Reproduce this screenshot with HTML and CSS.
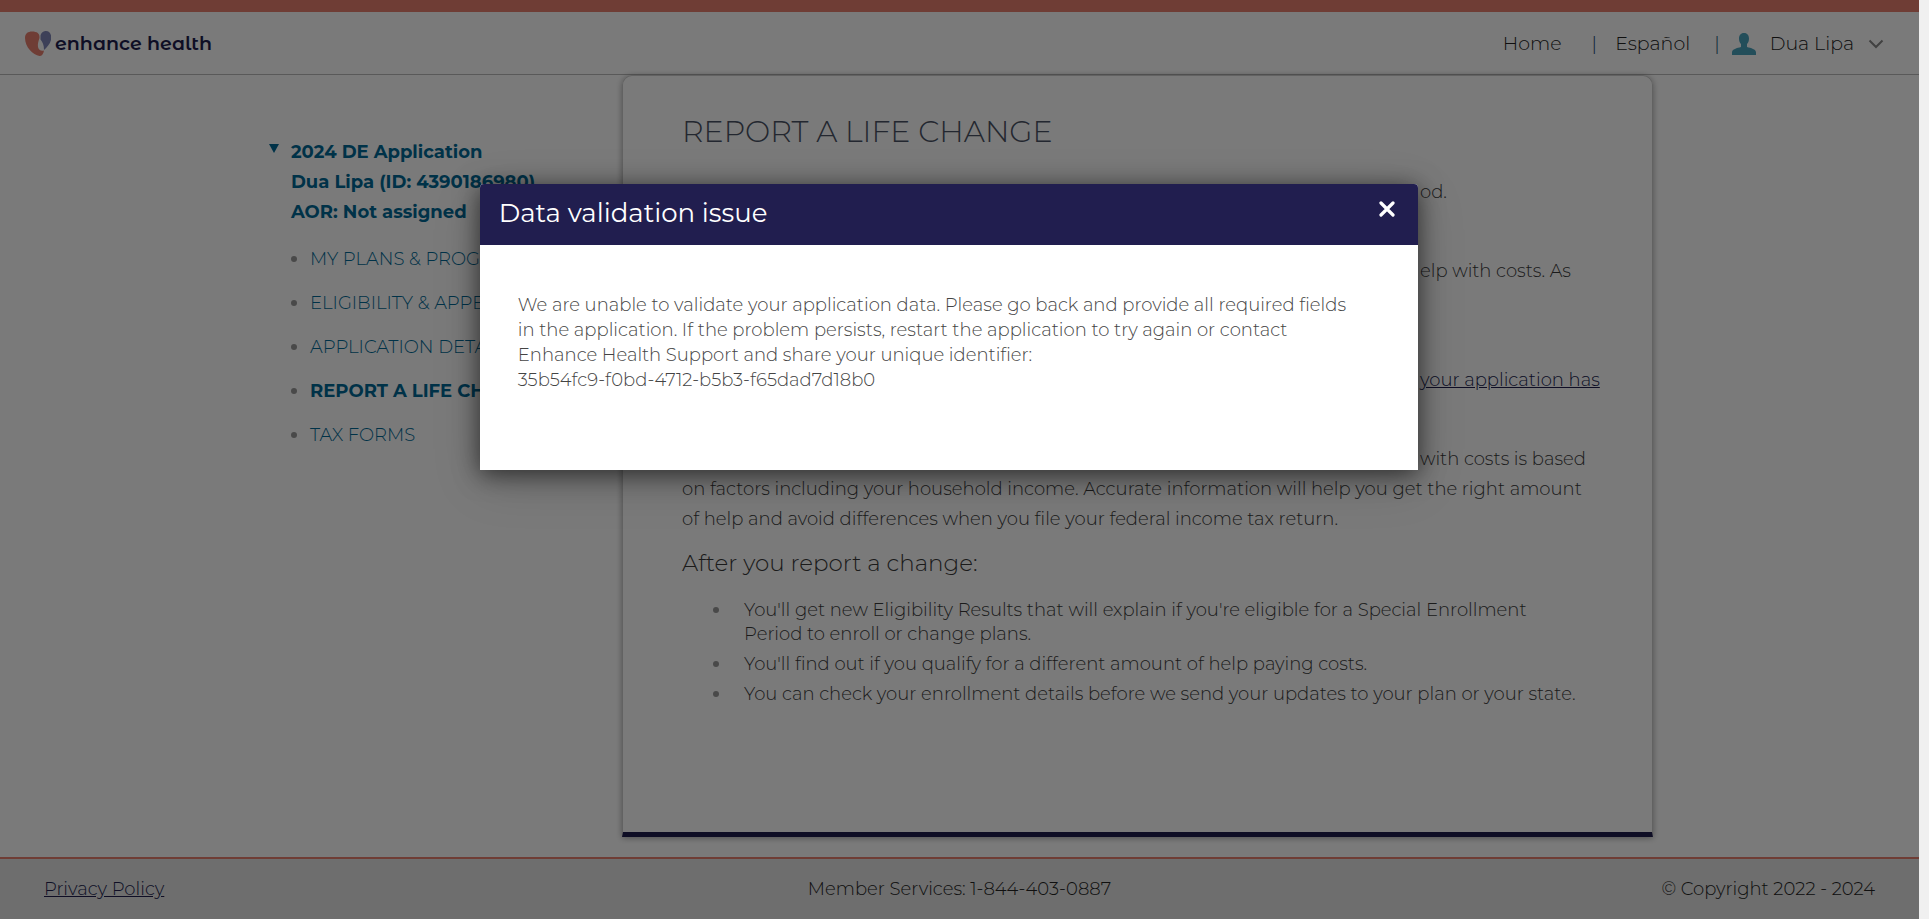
FILE: index.html
```html
<!DOCTYPE html>
<html lang="en">
<head>
<meta charset="utf-8">
<title>Report a life change</title>
<link rel="stylesheet" href="styles.css">
</head>
<body>
<div class="page">
  <header class="header">
    <a class="logo" href="#">
      <svg class="logo-mark" viewBox="0 0 26 25" aria-hidden="true">
        <path fill="#e98170" d="M0 7C0 2.500 3 .5 7 .5c5 0 8 2 7.500 6.500-1 3-2 6-1.500 9 .5 2.500 3 4.500 6 3.500C18.500 23 17 25 14.500 25 8 24 0 16 0 7Z"/>
        <path fill="#8187b8" d="M15.500 4.500C16.500 1 19 0 21 0c3 0 5.300 2.500 5.300 6.500 0 5-4 9.500-7.300 12.500 0-5-1.500-8-3.500-10.500Z"/>
      </svg>
      <span>enhance health</span>
    </a>
    <nav class="nav">
      <a class="nav-home" href="#">Home</a>
      <span class="bar">|</span>
      <a class="nav-lang" href="#">Español</a>
      <span class="bar">|</span>
      <button class="user" type="button">
        <svg class="user-icon" viewBox="0 0 24 22" aria-hidden="true"><path fill="#4aa3bd" d="M12 0c3.500 0 5 2.500 5 5.500 0 2.500-.7 4.200-2 5.500v3c4 1.200 9 2 9 5.500V22H0v-2.500C0 16 5 15.200 9 14v-3C7.700 9.700 7 8 7 5.500 7 2.500 8.500 0 12 0Z"/></svg>
        <span>Dua Lipa</span>
        <svg class="chevron" viewBox="0 0 16 10" aria-hidden="true"><path fill="none" stroke="#888" stroke-width="2" d="m1.500 1.500 6.500 6.500 6.500-6.500"/></svg>
      </button>
    </nav>
  </header>

  <div class="content">
    <aside class="side">
      <button class="app-toggle" type="button">
        <svg class="triangle" viewBox="0 0 10 9" aria-hidden="true"><path fill="#006a96" d="M0 0h10L5 9Z"/></svg>
        <span>2024 DE Application<br>Dua Lipa (ID: 4390186980)<br>AOR: Not assigned</span>
      </button>
      <ul class="menu">
        <li><a href="#">MY PLANS &amp; PROGRAMS</a></li>
        <li><a href="#">ELIGIBILITY &amp; APPEALS</a></li>
        <li><a href="#">APPLICATION DETAILS</a></li>
        <li><a class="current" href="#">REPORT A LIFE CHANGE</a></li>
        <li><a href="#">TAX FORMS</a></li>
      </ul>
    </aside>

    <main class="card">
      <h1>REPORT A LIFE CHANGE</h1>
      <p class="tail">od.</p>
      <p class="tail">elp with costs. As</p>
      <p class="tail second-line"><a href="#">your application has</a></p>
      <p class="tail last">with costs is based</p>
      <p>on factors including your household income. Accurate information will help you get the right amount<br>of help and avoid differences when you file your federal income tax return.</p>
      <h2>After you report a change:</h2>
      <ul class="steps">
        <li>You'll get new Eligibility Results that will explain if you're eligible for a Special Enrollment<br>Period to enroll or change plans.</li>
        <li>You'll find out if you qualify for a different amount of help paying costs.</li>
        <li>You can check your enrollment details before we send your updates to your plan or your state.</li>
      </ul>
    </main>
  </div>

  <footer class="footer">
    <a href="#">Privacy Policy</a>
    <span>Member Services: 1-844-403-0887</span>
    <span class="copyright">© Copyright 2022 - 2024</span>
  </footer>

  <div class="overlay">
    <section class="dialog" role="dialog" aria-modal="true" aria-labelledby="dialog-title">
      <div class="dialog-head">
        <h2 id="dialog-title">Data validation issue</h2>
        <button class="close" type="button" aria-label="Close"><svg viewBox="0 0 16 16" aria-hidden="true"><path fill="none" stroke="#fff" stroke-width="3.200" stroke-linecap="round" d="m2 2 12 12M14 2 2 14"/></svg></button>
      </div>
      <p class="dialog-text">We are unable to validate your application data. Please go back and provide all required fields<br>in the application. If the problem persists, restart the application to try again or contact<br>Enhance Health Support and share your unique identifier:<br>35b54fc9-f0bd-4712-b5b3-f65dad7d18b0</p>
    </section>
  </div>
</div>
</body>
</html>
```

FILE: styles.css
```css
* { box-sizing: border-box; }

body {
  margin: 0;
  padding-right: 10px;
  background: #f0f0f0;
  color: #3a3a3a;
  font: 300 18px/30px Montserrat, Inter, "Liberation Sans", sans-serif;
}

h1, h2, p, ul { margin: 0; padding: 0; font-weight: 300; }
ul { list-style: none; }
a { color: inherit; text-decoration: none; }
button { padding: 0; border: 0; background: none; color: inherit; font: inherit; text-align: left; cursor: pointer; }
svg { display: block; flex: none; }

.page {
  position: relative;
  display: flex;
  flex-direction: column;
  min-height: 100vh;
  background: #fff;
}

.header {
  display: flex;
  align-items: center;
  justify-content: space-between;
  height: 75px;
  padding: 0 35px 0 25px;
  border-top: 12px solid #e98170;
  border-bottom: 1px solid #bbb;
}

.logo { display: flex; align-items: center; gap: 4px; padding-top: 1px; color: #211e4f; font: 600 19px/26px "Montserrat Alternates", Montserrat, Lato, sans-serif; }
.logo-mark { width: 26px; height: 25px; }

.nav { display: flex; align-items: center; padding-top: 2px; color: #222; font-size: 19px; }
.nav-home { margin-right: 30px; }
.nav-lang { margin: 0 24px 0 18px; }
.bar { color: #1b4e75; }
.user { display: flex; align-items: center; gap: 14px; margin-left: 12px; }
.user-icon { width: 24px; height: 22px; }
.chevron { width: 16px; height: 10px; }

.content {
  display: grid;
  grid-template-columns: 356px 1fr;
  flex: 1;
  width: 100%;
  max-width: 1387px;
  margin: 0 auto 20px;
}

.side { padding: 62px 0 0 3px; color: #006a96; }
.app-toggle { display: flex; gap: 12px; font-weight: 700; white-space: nowrap; }
.triangle { width: 10px; height: 9px; margin-top: 7px; }
.menu { padding: 10px 0 0 22px; }
.menu li { display: flex; align-items: center; gap: 13px; height: 44px; }
.menu li::before, .steps li::before { content: ""; flex: none; width: 6px; height: 6px; border-radius: 50%; background: #999; }
.menu .current { font-weight: 700; }

.card {
  padding: 36px 24px 80px 59px;
  border: 1px solid #ccc;
  border-bottom: 5px solid #211e4f;
  border-radius: 10px 10px 0 0;
  box-shadow: 0 1px 6px rgba(0, 0, 0, .35);
}

.card h1 { padding-bottom: 25px; color: #4a5264; font-size: 30px; line-height: 40px; }
.card .tail { min-height: 60px; margin-bottom: 19px; padding-left: 738px; white-space: nowrap; }
.card .second-line { min-height: 90px; padding-top: 30px; }
.card .last { min-height: 0; margin-bottom: 0; }
.tail a { color: #211e4f; text-decoration: underline; }
.card h2 { padding: 13px 0 19px; font-size: 23px; line-height: 32px; }
.steps { padding-left: 31px; line-height: 24px; }
.steps li { display: grid; grid-template-columns: 6px 1fr; gap: 25px; margin-bottom: 6px; }
.steps li::before { margin-top: 9px; }

.footer {
  display: grid;
  grid-template-columns: 1fr auto 1fr;
  align-items: center;
  height: 62px;
  padding: 0 44px;
  border-top: 2px solid #e98170;
  background: #e5e5e5;
  color: #222;
}
.footer a { justify-self: start; color: #211e4f; text-decoration: underline; }
.copyright { justify-self: end; }

.overlay { position: absolute; inset: 0; padding: 184px 0 0 25%; background: rgba(0, 0, 0, .52); }
.dialog {
  width: 65.2%;
  min-height: 286px;
  border-radius: 4px 4px 0 0;
  background: #fff;
  box-shadow: 0 4px 24px rgba(0, 0, 0, .6), 0 12px 50px rgba(0, 0, 0, .15);
}
.dialog-head {
  display: flex;
  justify-content: space-between;
  height: 61px;
  padding: 13px 23px 0 19px;
  border-radius: 4px 4px 0 0;
  background: #211e4f;
  color: #fff;
}
.dialog-head h2 { font-size: 26px; line-height: 32px; font-weight: 400; }
.close { width: 16px; height: 16px; margin-top: 4px; }
.dialog-text { padding: 48px 38px; color: #444; line-height: 25px; white-space: nowrap; }
```
